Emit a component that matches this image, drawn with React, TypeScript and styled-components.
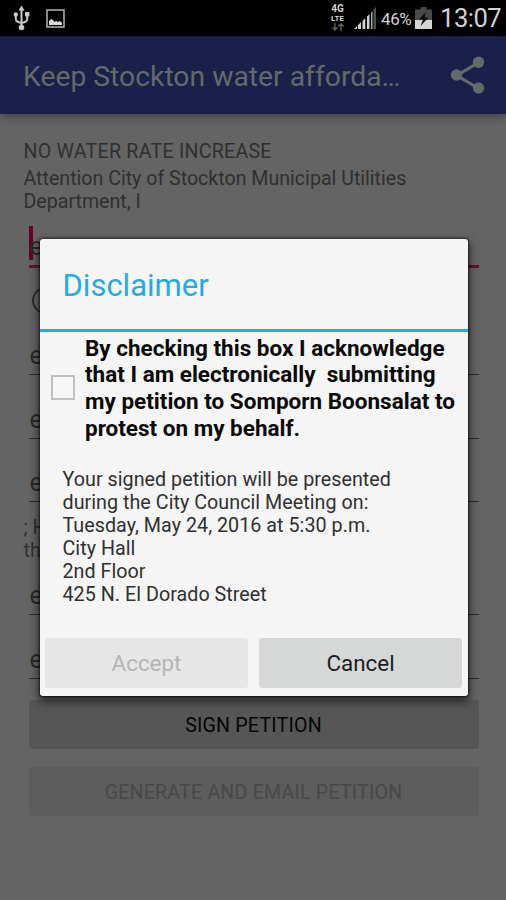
import React from 'react';
import styled, { createGlobalStyle } from 'styled-components';

const GlobalStyle = createGlobalStyle`
  * { box-sizing: border-box; }
  body { margin: 0; background: #646464; font-family: Roboto, sans-serif; }
  button { font-family: inherit; }
`;

const Screen = styled.div`
  position: relative;
  width: 506px;
  height: 900px;
  overflow: hidden;
  display: flex;
  flex-direction: column;
  background: #646464;
`;

const StatusBar = styled.div`
  height: 36px;
  flex: none;
  background: #000;
  color: #d2d2d2;
  display: flex;
  align-items: center;
  padding: 0 4px 0 13px;
`;

const UsbIcon = styled.svg`
  width: 17px;
  height: 26px;
`;

const PictureIcon = styled.svg`
  width: 19px;
  height: 19px;
  margin-left: 16px;
`;

const StatusRight = styled.div`
  margin-left: auto;
  display: flex;
  align-items: center;
`;

const NetworkIcon = styled.div`
  width: 17px;
  height: 28px;
  margin-right: 7px;
  display: flex;
  flex-direction: column;
  align-items: center;
  color: #d0d0d0;
  font-weight: 700;
`;

const NetworkLabel = styled.span<{ $size: number; $height: number }>`
  height: ${p => p.$height}px;
  font-size: ${p => p.$size}px;
  line-height: ${p => p.$height}px;
`;

const TrafficArrows = styled.svg`
  width: 14px;
  height: 8px;
`;

const SignalIcon = styled.svg`
  width: 24px;
  height: 24px;
  margin-right: 4px;
`;

const Percent = styled.span`
  width: 34px;
  font-size: 17px;
  line-height: 20px;
  letter-spacing: -0.4px;
  margin-top: 1px;
`;

const BatteryIcon = styled.svg`
  width: 17px;
  height: 24px;
`;

const Clock = styled.span`
  width: 62px;
  margin-left: 8px;
  font-size: 25.6px;
  line-height: 30px;
  letter-spacing: -0.5px;
  white-space: nowrap;
`;

const AppBar = styled.header`
  height: 78px;
  flex: none;
  display: flex;
  align-items: center;
  justify-content: space-between;
  padding: 0 18px 0 23px;
  background: #1a2049;
  color: #64696c;
  box-shadow: 0 2px 9px rgba(0, 0, 0, 0.42);
`;

const AppTitle = styled.h1`
  margin: 3px 0 0;
  font-size: 28.3px;
  font-weight: 400;
  line-height: 34px;
  white-space: nowrap;
`;

const ShareIcon = styled.svg`
  width: 38px;
  height: 42px;
`;

const Form = styled.main`
  padding: 26px 27.5px 0 28.5px;
  display: flex;
  flex-direction: column;
`;

const Copy = styled.p<{ $gap?: number; $spacing?: number }>`
  margin: ${p => p.$gap ?? 0}px 0 0 -5px;
  color: #303030;
  font-size: 19.6px;
  line-height: 23px;
  letter-spacing: ${p => p.$spacing ?? 0}px;
  white-space: pre;
`;

const Field = styled.div<{ $active?: boolean; $height?: number }>`
  height: ${p => p.$height ?? 63.6}px;
  display: flex;
  align-items: flex-end;
  padding: 0 0 1px 1px;
  color: #2a2a2a;
  font-size: 25px;
  line-height: 34px;
  border-bottom: ${p => (p.$active ? '3px solid #65132f' : '1px solid #2b2b2b')};
`;

const Caret = styled.span`
  width: 4px;
  height: 34px;
  margin: 0 -3px 4px -1px;
  background: #67002d;
`;

const RadioRow = styled.div`
  height: 43.5px;
  padding: 19px 0 0 3px;
`;

const Radio = styled.div`
  width: 27px;
  height: 27px;
  border: 2px solid #2b2b2b;
  border-radius: 50%;
`;

const PageButton = styled.button<{ $disabled?: boolean }>`
  height: 49px;
  margin: ${p => (p.$disabled ? '18px' : '21px')} 0 0;
  padding: 1px 0 0;
  border: 0;
  border-radius: 3px;
  background: ${p => (p.$disabled ? '#5d5d5d' : '#565656')};
  color: ${p => (p.$disabled ? '#484848' : '#050505')};
  font-size: 19.6px;
  letter-spacing: 0.2px;
`;

const Dialog = styled.section`
  position: absolute;
  left: 39.5px;
  top: 239px;
  width: 428px;
  height: 457px;
  display: flex;
  flex-direction: column;
  background: #f5f5f5;
  border-radius: 3px;
  box-shadow: 0 0 2px 1px rgba(0, 0, 0, 0.5), 0 4px 10px 1px rgba(0, 0, 0, 0.65);
`;

const DialogTitle = styled.h2`
  height: 93px;
  flex: none;
  margin: 0;
  padding: 1px 0 0 23px;
  border-bottom: 3px solid #28a9d8;
  color: #28aadb;
  font-size: 31px;
  font-weight: 400;
  line-height: 92px;
`;

const Agreement = styled.label`
  display: flex;
  align-items: center;
  height: 108px;
  padding-left: 11.5px;
  margin-top: 2px;
`;

const CheckBox = styled.span`
  width: 24px;
  height: 25px;
  flex: none;
  margin: 0 10px 2px 0;
  border: 2px solid #c0c0c0;
  background: #f7f7f7;
`;

const AgreementText = styled.span`
  color: #0a0a0a;
  font-size: 22.5px;
  font-weight: 700;
  line-height: 26.7px;
  white-space: pre;
`;

const Details = styled.p`
  margin: 26px 0 0 23px;
  color: #303030;
  font-size: 19.7px;
  line-height: 23px;
  letter-spacing: 0.04px;
  white-space: pre;
`;

const Actions = styled.div`
  display: grid;
  grid-template-columns: 1fr 1fr;
  gap: 11px;
  margin-top: auto;
  padding: 0 5.5px 8px;
`;

const DialogButton = styled.button<{ $disabled?: boolean }>`
  height: 50px;
  padding: 0;
  border: 0;
  border-radius: 3px;
  background: ${p => (p.$disabled ? '#e6e6e6' : '#d6d8d7')};
  color: ${p => (p.$disabled ? '#b5b5b5' : '#1c1c1c')};
  font-size: 22.4px;
`;

export default function App() {
  return (
    <Screen>
      <GlobalStyle />
      <StatusBar>
        <UsbIcon viewBox="0 0 17 26" fill="none" stroke="#c9c9c9" strokeWidth="2">
          <path d="M8.5 4v18M2.8 10v4q0 3 5.7 4M14.2 9v5q0 3-5.7 4" />
          <path d="M8.5 0.5l3 5h-6z" fill="#c9c9c9" stroke="none" />
          <circle cx="2.8" cy="9.5" r="2.2" fill="#c9c9c9" stroke="none" />
          <path d="M12 7h4.4v4.4H12z" fill="#c9c9c9" stroke="none" />
          <circle cx="8.5" cy="22.5" r="2.8" fill="#c9c9c9" stroke="none" />
        </UsbIcon>
        <PictureIcon viewBox="0 0 19 19">
          <path d="M1 1h17v17H1z" fill="none" stroke="#b5b5b5" strokeWidth="1.5" />
          <path d="M3 16v-4l2-2 2 1 1.5 2 1.5-1 2 1 2-1 2 2v2z" fill="#dadada" />
        </PictureIcon>
        <StatusRight>
          <NetworkIcon>
            <NetworkLabel $size={10} $height={10}>4G</NetworkLabel>
            <NetworkLabel $size={8} $height={9}>LTE</NetworkLabel>
            <TrafficArrows viewBox="0 0 14 8" fill="none" stroke="#606060" strokeWidth="1.5">
              <path d="M4 0v7M1.5 4.5l2.5 2.5 2.5-2.5M10 8V1M7.5 3.5L10 1l2.5 2.5" />
            </TrafficArrows>
          </NetworkIcon>
          <SignalIcon viewBox="0 0 24 24">
            <path d="M1 23l3-3v3zM5 23v-4l3-3v7zM9.5 23v-8l2.8-2.8V23zM14 23V10.5l2.5-2.5v15z" fill="#d0d0d0" />
            <path d="M18 23V6.5l1.5-1.5v18z" fill="#a8a8a8" />
            <path d="M20.5 23V3.5l2.5-2.5v22z" fill="#505050" />
          </SignalIcon>
          <Percent>46%</Percent>
          <BatteryIcon viewBox="0 0 17 24">
            <path d="M5.5 1h6v2.5H17V14H0V3.5h5.5z" fill="#494949" />
            <path d="M0 14h17v9H0z" fill="#d6d6d6" />
            <path d="M11 6l-7 7.5h4L5.5 20l8-8.5h-4z" fill="#0b0b0b" />
          </BatteryIcon>
          <Clock>13:07</Clock>
        </StatusRight>
      </StatusBar>

      <AppBar>
        <AppTitle>Keep Stockton water afforda…</AppTitle>
        <ShareIcon viewBox="0 0 38 42" fill="#64696c">
          <path d="M28.5 8.5L7 21.5l21.5 13" fill="none" stroke="#64696c" strokeWidth="3.2" />
          <circle cx="28.5" cy="8.3" r="5.7" />
          <circle cx="6.5" cy="21" r="5.7" />
          <circle cx="28.5" cy="34" r="5.7" />
        </ShareIcon>
      </AppBar>

      <Form>
        <Copy $spacing={0.25}>NO WATER RATE INCREASE</Copy>
        <Copy $gap={4}>{'Attention City of Stockton Municipal Utilities\nDepartment, I'}</Copy>
        <Field $active $height={55}><Caret />e</Field>
        <RadioRow><Radio /></RadioRow>
        <Field>e</Field>
        <Field>e</Field>
        <Field>e</Field>
        <Copy $gap={14}>{'; HI\nthe'}</Copy>
        <Field $height={53.2}>e</Field>
        <Field>e</Field>
        <PageButton>SIGN PETITION</PageButton>
        <PageButton $disabled>GENERATE AND EMAIL PETITION</PageButton>
      </Form>

      <Dialog role="dialog" aria-label="Disclaimer">
        <DialogTitle>Disclaimer</DialogTitle>
        <Agreement>
          <CheckBox />
          <AgreementText>
            {'By checking this box I acknowledge\nthat I am electronically  submitting\nmy petition to Somporn Boonsalat to\nprotest on my behalf.'}
          </AgreementText>
        </Agreement>
        <Details>
          {'Your signed petition will be presented\nduring the City Council Meeting on:\nTuesday, May 24, 2016 at 5:30 p.m.\nCity Hall\n2nd Floor\n425 N. El Dorado Street'}
        </Details>
        <Actions>
          <DialogButton $disabled>Accept</DialogButton>
          <DialogButton>Cancel</DialogButton>
        </Actions>
      </Dialog>
    </Screen>
  );
}
